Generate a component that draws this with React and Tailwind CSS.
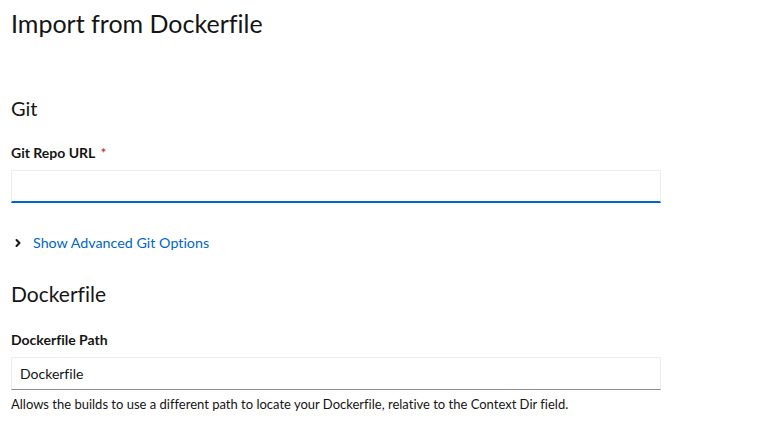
import { ChevronRight } from 'lucide-react';

const FONT = { fontFamily: 'Lato, "Noto Sans", sans-serif' };

function Field({ label, required, value, focused, helper }) {
  return (
    <div className="flex flex-col">
      <label className="text-[14px] font-bold text-[#151515] leading-[21px] mb-[7px]">
        {label}
        {required && <span className="ml-[5px] font-normal text-[#c9190b]">*</span>}
      </label>
      <div
        className={
          'w-[650px] h-[33px] flex items-center px-[8px] text-[14px] text-[#151515] border border-[#ededed] ' +
          (focused ? 'border-b-2 border-b-[#0066cc]' : 'border-b-[#8a8d90]')
        }
      >
        {value}
      </div>
      {helper && <p className="mt-[4px] text-[13px] text-[#151515] leading-[20px]">{helper}</p>}
    </div>
  );
}

export default function App() {
  return (
    <div
      className="w-[762px] h-[422px] bg-white pl-[11px] pt-[5px] [font-variant-ligatures:none]"
      style={FONT}
    >
      <h1 className="text-[25px] leading-[36px] text-[#151515]">Import from Dockerfile</h1>

      <h2 className="mt-[52px] text-[20px] leading-[30px] text-[#151515]">Git</h2>
      <div className="mt-[19px]">
        <Field label="Git Repo URL" required focused value="" />
      </div>

      <button className="mt-[30px] flex items-center gap-[9px] text-[14.3px] text-[#0066cc] leading-[20px]">
        <ChevronRight size={12} strokeWidth={4} className="text-[#151515] ml-[1px]" />
        Show Advanced Git Options
      </button>

      <h2 className="mt-[26px] text-[21px] leading-[30px] text-[#151515]">Dockerfile</h2>
      <div className="mt-[20px]">
        <Field
          label="Dockerfile Path"
          value="Dockerfile"
          helper="Allows the builds to use a different path to locate your Dockerfile, relative to the Context Dir field."
        />
      </div>
    </div>
  );
}
